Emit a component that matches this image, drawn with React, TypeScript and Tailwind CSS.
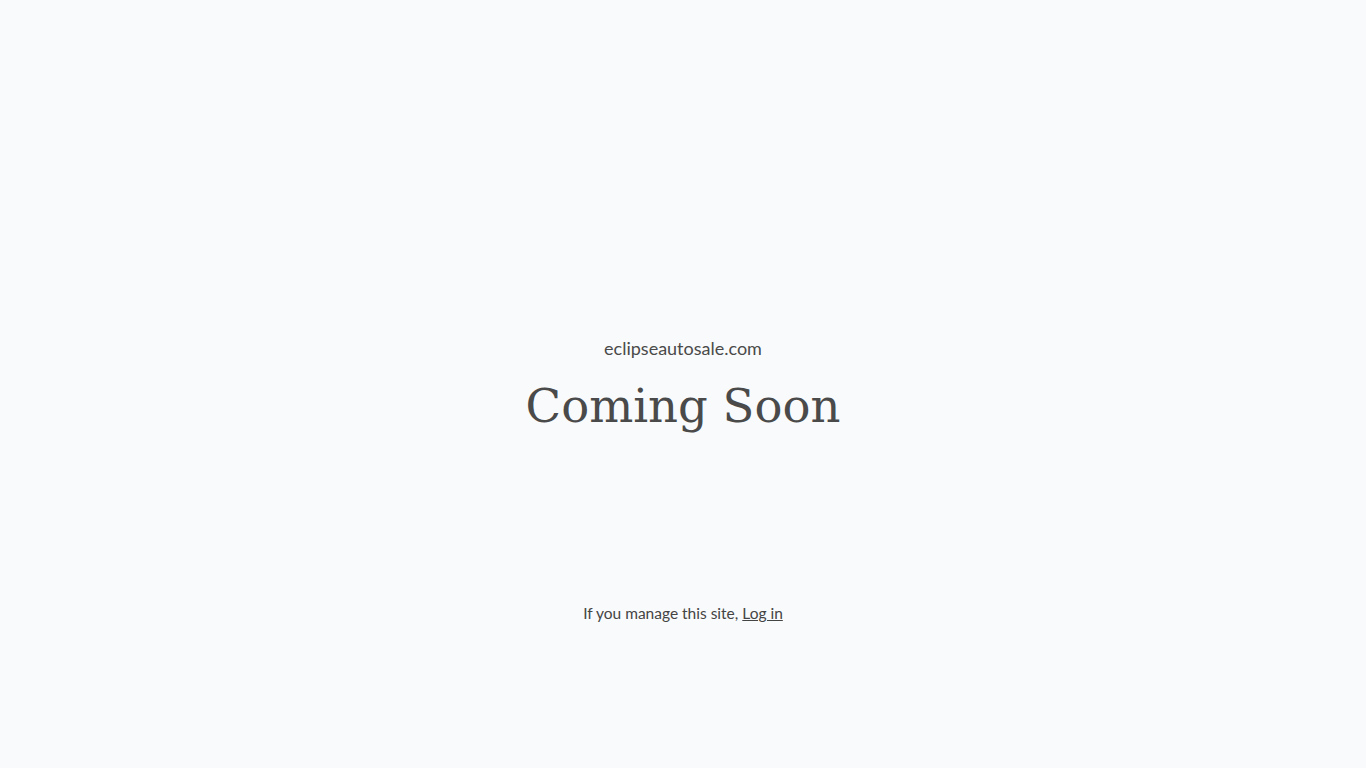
export default function App() {
  return (
    <div className="min-h-screen bg-[#f9fafb] text-[#4a4a4a] flex flex-col items-center pt-[335px]" style={{ fontFamily: "Lato, 'Noto Sans', sans-serif" }}>
      <p className="text-[18px] leading-[26px] text-[#4a4a4a]">eclipseautosale.com</p>
      <h1 className="mt-[16px] text-[46.5px] leading-[58px] text-[#4a4a4a]" style={{ fontFamily: "'DejaVu Serif', 'Liberation Serif', serif" }}>
        Coming Soon
      </h1>
      <p className="mt-[166px] text-[15.5px] leading-[24px] text-[#444]">
        If you manage this site,{" "}
        <a href="#" className="underline text-[#444]">Log in</a>
      </p>
    </div>
  )
}
